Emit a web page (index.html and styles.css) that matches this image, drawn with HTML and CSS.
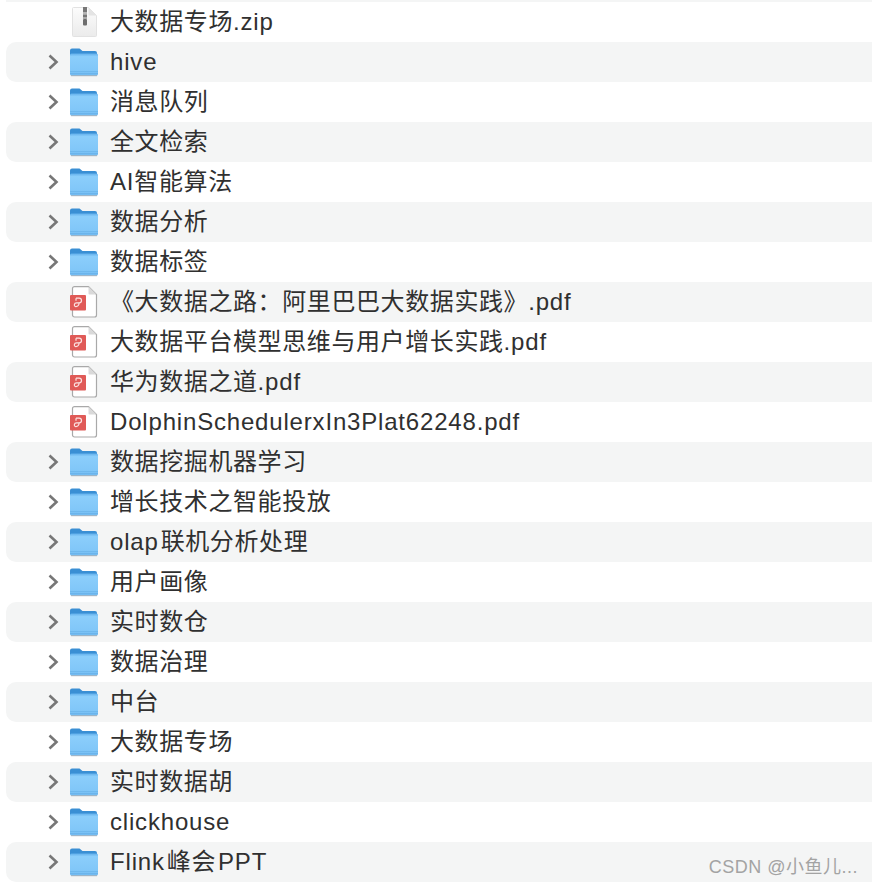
FILE: index.html
```html
<html>

<head>
    <meta charset="UTF-8">
    <link rel="stylesheet" href="styles.css">
</head>

<body>
    <svg class="defs" width="0" height="0">
        <defs>
            <linearGradient id="fold" x1="0" y1="0" x2="0" y2="1">
                <stop offset="0" stop-color="#62b0ec" />
                <stop offset=".14" stop-color="#8bcefb" />
                <stop offset=".8" stop-color="#80c6f8" />
                <stop offset="1" stop-color="#6fb9f1" />
            </linearGradient>
            <linearGradient id="sheet" x1="0" y1="0" x2="0" y2="1">
                <stop offset="0" stop-color="#fcfcfc" />
                <stop offset="1" stop-color="#ebebeb" />
            </linearGradient>
        </defs>
        <symbol id="folder" viewBox="0 0 30 34">
            <path d="M2 5.500a2 2 0 0 1 2-2h7.500l3 2.500h12.500a2 2 0 0 1 2 2v5H2z" fill="#3a8fd4" />
            <rect x="2" y="8.500" width="28" height="22" rx="1.500" fill="url(#fold)" />
            <path d="M2 26.500h28M2 28.500h28" stroke="#5aa5df" stroke-opacity=".4" />
            <path d="M3 30.700h26" stroke="#8d9aa5" stroke-opacity=".7" />
        </symbol>
        <symbol id="chevron" viewBox="0 0 14 18">
            <path d="M3.500 2.500l7 6.500-7 6.500" fill="none" stroke="#777" stroke-width="2.600" />
        </symbol>
        <symbol id="zip" viewBox="0 0 30 34">
            <path d="M5.500 2.500h15l8 8v20a1 1 0 0 1-1 1h-22a1 1 0 0 1-1-1v-27a1 1 0 0 1 1-1z" fill="url(#sheet)" stroke="#e2e2e2" />
            <path d="M20.500 2.500v7a1 1 0 0 0 1 1h7z" fill="#e4e4e4" />
            <rect x="15" y="2" width="4" height="5" fill="#777" />
            <rect x="15" y="7" width="4" height="2.500" fill="#b5b5b5" />
            <rect x="15" y="9.500" width="4" height="2.500" fill="#777" />
            <rect x="15" y="12" width="4" height="2" fill="#aaa" />
            <rect x="15" y="14" width="4" height="6.500" rx="1" fill="#6d6d6d" />
        </symbol>
        <symbol id="pdf" viewBox="0 0 30 34">
            <path d="M6.500 1.600h14l8 8v20.400a2 2 0 0 1-2 2h-20a2 2 0 0 1-2-2v-26.400a2 2 0 0 1 2-2z" fill="#fff" stroke="#a9a9a9" stroke-width="1.200" />
            <path d="M20.500 1.600v7a1 1 0 0 0 1 1h7z" fill="#d9d9d9" />
            <rect x="2" y="10" width="16" height="15.500" rx="1" fill="#e05a57" />
            <path d="M8 13.200h3.200a2.300 2.300 0 0 1 0 4.600H8.500c-2.500 0-3 3.800-.5 3.800 2 0 3-2 3.200-3.800M8 13.200v2.500" fill="none" stroke="#fbe3e2" stroke-width="1.200" />
        </symbol>
    </svg>

    <ul class="files">
        <li class="row top"></li>
        <li class="row"><span class="arrow"></span><svg class="icon"><use href="#zip" /></svg><span class="name">大数据专场<span class="lat">.zip</span></span></li>
        <li class="row"><svg class="arrow"><use href="#chevron" /></svg><svg class="icon"><use href="#folder" /></svg><span class="name"><span class="lat">hive</span></span></li>
        <li class="row"><svg class="arrow"><use href="#chevron" /></svg><svg class="icon"><use href="#folder" /></svg><span class="name">消息队列</span></li>
        <li class="row"><svg class="arrow"><use href="#chevron" /></svg><svg class="icon"><use href="#folder" /></svg><span class="name">全文检索</span></li>
        <li class="row"><svg class="arrow"><use href="#chevron" /></svg><svg class="icon"><use href="#folder" /></svg><span class="name"><span class="lat">AI</span>智能算法</span></li>
        <li class="row"><svg class="arrow"><use href="#chevron" /></svg><svg class="icon"><use href="#folder" /></svg><span class="name">数据分析</span></li>
        <li class="row"><svg class="arrow"><use href="#chevron" /></svg><svg class="icon"><use href="#folder" /></svg><span class="name">数据标签</span></li>
        <li class="row"><span class="arrow"></span><svg class="icon"><use href="#pdf" /></svg><span class="name">《大数据之路：阿里巴巴大数据实践》<span class="lat">.pdf</span></span></li>
        <li class="row"><span class="arrow"></span><svg class="icon"><use href="#pdf" /></svg><span class="name">大数据平台模型思维与用户增长实践<span class="lat">.pdf</span></span></li>
        <li class="row"><span class="arrow"></span><svg class="icon"><use href="#pdf" /></svg><span class="name">华为数据之道<span class="lat">.pdf</span></span></li>
        <li class="row"><span class="arrow"></span><svg class="icon"><use href="#pdf" /></svg><span class="name"><span class="lat">DolphinSchedulerxIn3Plat62248.pdf</span></span></li>
        <li class="row"><svg class="arrow"><use href="#chevron" /></svg><svg class="icon"><use href="#folder" /></svg><span class="name">数据挖掘机器学习</span></li>
        <li class="row"><svg class="arrow"><use href="#chevron" /></svg><svg class="icon"><use href="#folder" /></svg><span class="name">增长技术之智能投放</span></li>
        <li class="row"><svg class="arrow"><use href="#chevron" /></svg><svg class="icon"><use href="#folder" /></svg><span class="name"><span class="lat gap">olap</span>联机分析处理</span></li>
        <li class="row"><svg class="arrow"><use href="#chevron" /></svg><svg class="icon"><use href="#folder" /></svg><span class="name">用户画像</span></li>
        <li class="row"><svg class="arrow"><use href="#chevron" /></svg><svg class="icon"><use href="#folder" /></svg><span class="name">实时数仓</span></li>
        <li class="row"><svg class="arrow"><use href="#chevron" /></svg><svg class="icon"><use href="#folder" /></svg><span class="name">数据治理</span></li>
        <li class="row"><svg class="arrow"><use href="#chevron" /></svg><svg class="icon"><use href="#folder" /></svg><span class="name">中台</span></li>
        <li class="row"><svg class="arrow"><use href="#chevron" /></svg><svg class="icon"><use href="#folder" /></svg><span class="name">大数据专场</span></li>
        <li class="row"><svg class="arrow"><use href="#chevron" /></svg><svg class="icon"><use href="#folder" /></svg><span class="name">实时数据胡</span></li>
        <li class="row"><svg class="arrow"><use href="#chevron" /></svg><svg class="icon"><use href="#folder" /></svg><span class="name"><span class="lat">clickhouse</span></span></li>
        <li class="row"><svg class="arrow"><use href="#chevron" /></svg><svg class="icon"><use href="#folder" /></svg><span class="name"><span class="lat gap">Flink</span>峰会<span class="lat before">PPT</span></span></li>
    </ul>
    <div class="mark">CSDN @小鱼儿...</div>
</body>

</html>
```

FILE: styles.css
```css
* {
    margin: 0;
    padding: 0;
    box-sizing: border-box;
}

html,
body {
    height: 886px;
    overflow: hidden;
    background-color: white;
}

body {
    position: relative;
    font-family: "Liberation Sans", "Noto Sans CJK SC", sans-serif;
    color: #303030;
}

.defs {
    position: absolute;
}

.files {
    list-style: none;
    margin-left: 6px;
}

.row {
    display: flex;
    align-items: center;
    height: 40px;
    padding-left: 40px;
    font-size: 24px;
    white-space: nowrap;
}

.row:nth-child(odd) {
    background-color: #f4f5f5;
    border-radius: 10px 0 0 10px;
}

.row.top {
    height: 2px;
    border-radius: 0;
}

.arrow {
    width: 14px;
    height: 18px;
    flex: none;
}

.icon {
    width: 30px;
    height: 34px;
    margin-left: 8px;
    flex: none;
}

.name {
    margin-left: 12px;
    line-height: 40px;
    letter-spacing: .6px;
}

.lat {
    letter-spacing: .82px;
}

.gap {
    margin-right: 2px;
}

.before {
    margin-left: 2px;
}

.mark {
    position: absolute;
    top: 856px;
    right: 14px;
    font-size: 18px;
    line-height: 22px;
    letter-spacing: .5px;
    color: #a3a3a3;
}
```
